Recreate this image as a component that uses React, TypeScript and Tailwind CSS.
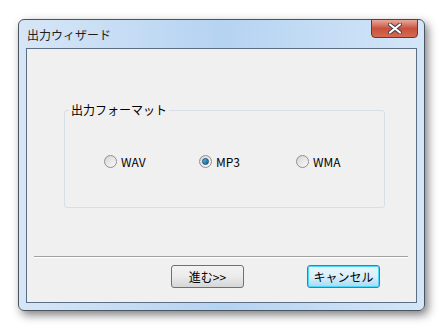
import React from 'react';

const font = { fontFamily: '"Noto Sans CJK JP", "Liberation Sans", sans-serif' };

function Radio({ label, checked = false }: { label: string; checked?: boolean }) {
  return (
    <label className="flex items-center gap-[4px] text-[12px] text-black leading-none">
      <span className="w-[13px] h-[13px] rounded-full border border-[#8f8f8f] bg-gradient-to-br from-[#d6d6d6] to-[#fafafa] flex items-center justify-center">
        {checked && (
          <span className="w-[7px] h-[7px] rounded-full bg-gradient-to-br from-[#5fb7e8] to-[#0c5d96] border border-[#1c4f7a]" />
        )}
      </span>
      <span>{label}</span>
    </label>
  );
}

export default function App() {
  return (
    <div className="w-[447px] h-[331px] bg-white pl-[18px] pt-[19px]" style={font}>
      <div className="w-[407px] h-[292px] rounded-[6px] border border-[#4b5461] shadow-[3px_4px_10px_rgba(0,0,0,0.5)] bg-gradient-to-r from-[#d7e6f6] via-[#b5d3f2] to-[#d4e6f8] flex flex-col px-[7px] pb-[7px]">
        {/* title bar */}
        <div className="h-[28px] flex items-start justify-between">
          <span className="pt-[7px] pl-[1px] text-[12px] text-[#1e1e1e] leading-[16px]">出力ウィザード</span>
          <button className="w-[47px] h-[19px] -mt-[1px] -mr-[1px] rounded-b-[4px] border border-[#7b3127] bg-gradient-to-b from-[#e8a89c] via-[#c8513d] to-[#d56a50] flex items-center justify-center">
            <svg width="14" height="11" viewBox="0 0 14 11">
              <path d="M2 1.5 L12 9.5 M12 1.5 L2 9.5" stroke="#40404a" strokeWidth="4" strokeLinecap="round" />
              <path d="M2 1.5 L12 9.5 M12 1.5 L2 9.5" stroke="#ffffff" strokeWidth="2.2" strokeLinecap="round" />
            </svg>
          </button>
        </div>
        {/* client area */}
        <div className="flex-1 border border-[#5c6e84] bg-[#f0f0f0] flex flex-col">
          <fieldset className="mt-[53px] ml-[37px] w-[321px] h-[106px] border border-[#d5dfe5] rounded-[3px] px-0">
            <legend className="ml-[4px] px-[2px] text-[12px] leading-[16px] text-black">出力フォーマット</legend>
            <div className="mt-[37px] ml-[39px] flex">
              <div className="w-[95px]"><Radio label="WAV" /></div>
              <div className="w-[97px]"><Radio label="MP3" checked /></div>
              <div><Radio label="WMA" /></div>
            </div>
          </fieldset>
          <div className="mt-[48px] ml-[7px] w-[374px] h-[2px] border-t border-[#a0a0a0] border-b border-b-white" />
          <div className="mt-[7px] ml-[144px] flex gap-[63px]">
            <button className="w-[73px] h-[23px] rounded-[3px] border border-[#707070] bg-gradient-to-b from-[#f3f3f3] via-[#ebebeb] to-[#d6d6d6] text-[12px] text-black leading-none">
              進む&gt;&gt;
            </button>
            <button className="w-[73px] h-[23px] rounded-[3px] border border-[#3c7fb1] bg-gradient-to-b from-[#eaf6fd] via-[#d9f0fc] to-[#a7d9f5] shadow-[inset_0_0_0_1px_#48d8fb] text-[12px] text-black leading-none">
              キャンセル
            </button>
          </div>
        </div>
      </div>
    </div>
  );
}
